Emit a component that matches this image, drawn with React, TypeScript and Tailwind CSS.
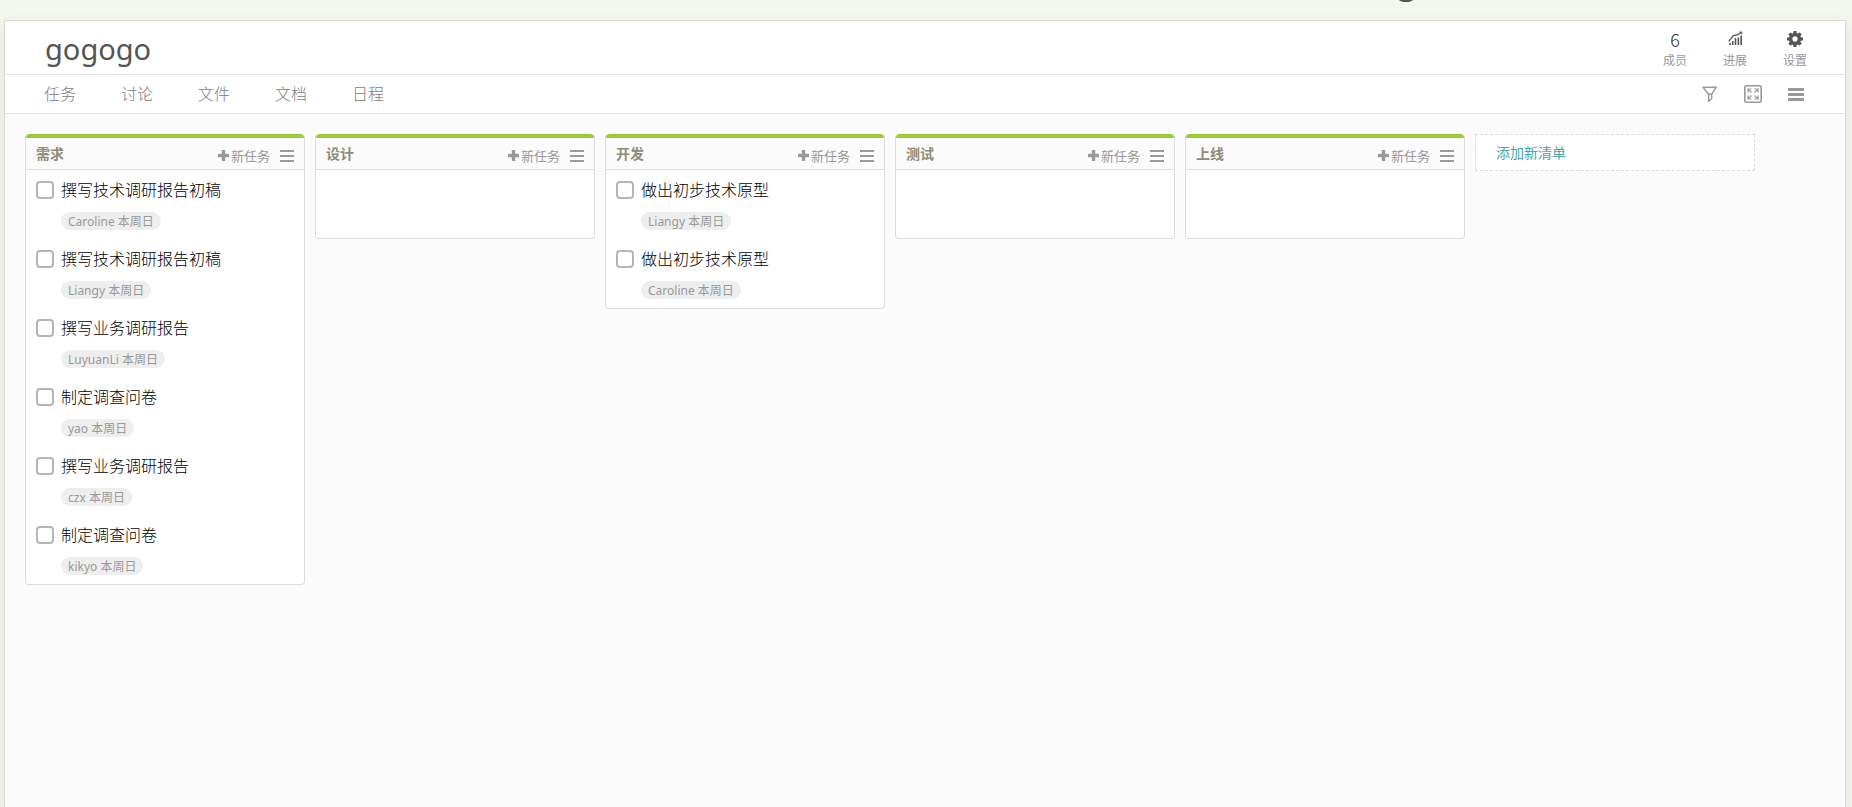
import React, { useState } from 'react';

type Task = {
  id: number;
  title: string;
  assignee: string;
  due: string;
};

type TaskList = {
  id: number;
  name: string;
  tasks: Task[];
};

const tabs = ['任务', '讨论', '文件', '文档', '日程'];

const lists: TaskList[] = [
  {
    id: 1,
    name: '需求',
    tasks: [
      { id: 1, title: '撰写技术调研报告初稿', assignee: 'Caroline', due: '本周日' },
      { id: 2, title: '撰写技术调研报告初稿', assignee: 'Liangy', due: '本周日' },
      { id: 3, title: '撰写业务调研报告', assignee: 'LuyuanLi', due: '本周日' },
      { id: 4, title: '制定调查问卷', assignee: 'yao', due: '本周日' },
      { id: 5, title: '撰写业务调研报告', assignee: 'czx', due: '本周日' },
      { id: 6, title: '制定调查问卷', assignee: 'kikyo', due: '本周日' },
    ],
  },
  { id: 2, name: '设计', tasks: [] },
  {
    id: 3,
    name: '开发',
    tasks: [
      { id: 7, title: '做出初步技术原型', assignee: 'Liangy', due: '本周日' },
      { id: 8, title: '做出初步技术原型', assignee: 'Caroline', due: '本周日' },
    ],
  },
  { id: 4, name: '测试', tasks: [] },
  { id: 5, name: '上线', tasks: [] },
];

export default function App() {
  const [done, setDone] = useState<number[]>([]);

  const toggleTask = (id: number) => {
    setDone(done.includes(id) ? done.filter(d => d !== id) : [...done, id]);
  };

  return (
    <div className="flex flex-col h-screen overflow-hidden bg-[#f4f7ee] pl-1 pr-1.5 font-['Noto_Sans','Noto_Sans_CJK_SC',sans-serif] text-[#999]">
      {/* scrolled-away page title */}
      <div className="h-5 shrink-0 pl-[76%]">
        <div className="-ml-2 flex h-0.5 items-end overflow-hidden text-4xl leading-[45px] text-[#555]">g</div>
      </div>

      <main className="flex flex-1 flex-col border border-b-0 border-[#d9dcd3] bg-[#fbfbfb] shadow-[0_4px_12px_rgba(120,120,60,0.14)]">
        <header className="flex h-[54px] shrink-0 items-center justify-between border-b border-[#e5e5e5] bg-white pl-10 pr-5">
          <h1 className="pt-0.5 text-[29px] leading-9 text-[#555]">gogogo</h1>
          <div className="flex pt-0.5 text-xs leading-4">
            <a href="#members" className="flex w-15 flex-col items-center gap-1">
              <span className="flex h-5 items-center font-['Noto_Sans_CJK_SC',sans-serif] text-lg leading-5 font-light text-[#333]">6</span>
              成员
            </a>
            <a href="#progress" className="flex w-15 flex-col items-center gap-1">
              <span className="flex h-5 items-center text-[#555]"><ChartIcon /></span>
              进展
            </a>
            <a href="#settings" className="flex w-15 flex-col items-center gap-1">
              <span className="flex h-5 items-center text-[#555]"><CogIcon /></span>
              设置
            </a>
          </div>
        </header>

        <nav className="flex h-[39px] shrink-0 items-center justify-between border-b border-[#e5e5e5] bg-white pl-[39px] pr-[41px]">
          <div className="flex gap-[45px] text-base leading-6 font-light text-[#808080]">
            {tabs.map(tab => (
              <a key={tab} href={`#${tab}`}>{tab}</a>
            ))}
          </div>
          <div className="flex items-center gap-[26px]">
            <button type="button" aria-label="筛选"><FilterIcon /></button>
            <button type="button" aria-label="全屏"><ExpandIcon /></button>
            <button type="button" aria-label="菜单"><MenuIcon /></button>
          </div>
        </nav>

        <div className="flex items-start gap-2.5 px-5 pt-5">
          {lists.map(list => (
            <section key={list.id} className="w-70 shrink-0 rounded border border-t-0 border-[#dcdcdc] bg-white">
              <div className="h-1 rounded-t-sm bg-[#9c3]"></div>
              <div className="flex h-8 items-center justify-between border-b border-[#dcdcdc] bg-[#fbfbfb] px-2.5">
                <h2 className="text-sm leading-5 font-bold text-[#8c8c78]">{list.name}</h2>
                <div className="flex items-center gap-2.5 pt-1">
                  <button type="button" className="flex items-center gap-0.5 text-[13px] leading-5">
                    <PlusIcon />
                    新任务
                  </button>
                  <button type="button" aria-label="清单菜单"><ListMenuIcon /></button>
                </div>
              </div>
              <ul className="min-h-[68px]">
                {list.tasks.map(task => (
                  <li key={task.id} className="h-[69px] px-2.5 pt-2">
                    <label className="flex items-center gap-[7px] text-base leading-6 font-light text-black">
                      <input
                        type="checkbox"
                        checked={done.includes(task.id)}
                        onChange={() => toggleTask(task.id)}
                        className="size-[18px] appearance-none rounded border-2 border-[#b5b5b5] bg-white checked:bg-[#9c3]"
                      />
                      {task.title}
                    </label>
                    <div className="flex pl-[25px] pt-2.5">
                      <span className="h-[18px] overflow-hidden rounded-full bg-[#eee] px-[7px] text-xs leading-5">
                        {task.assignee} {task.due}
                      </span>
                    </div>
                  </li>
                ))}
              </ul>
            </section>
          ))}
          <button type="button" className="h-[37px] w-70 shrink-0 border border-dashed border-[#dcdcdc] bg-white px-5 text-left text-sm leading-5 text-[#4aa5a8]">
            添加新清单
          </button>
        </div>
      </main>
    </div>
  );
}

function CogIcon() {
  return (
    <svg width="16" height="16" viewBox="0 128 1536 1536" fill="currentColor">
      <path d="M1024 896q0-106-75-181t-181-75-181 75-75 181 75 181 181 75 181-75 75-181zm512-109v222q0 12-8 23t-20 13l-185 28q-19 54-39 91 35 50 107 138 10 12 10 25t-9 23q-27 37-99 108t-94 71q-12 0-26-9l-138-108q-44 23-91 38-16 136-29 186-7 28-36 28h-222q-14 0-24.5-8.5t-11.5-21.5l-28-184q-49-16-90-37l-141 107q-10 9-25 9-14 0-25-11-126-114-165-168-7-10-7-23 0-12 8-23 15-21 51-66.5t54-70.5q-27-50-41-99l-183-27q-13-2-21-12.5t-8-23.5v-222q0-12 8-23t19-13l186-28q14-46 39-92-40-57-107-138-10-12-10-24 0-10 9-23 26-36 98.5-107.5t94.5-71.5q13 0 26 10l138 107q44-23 91-38 16-136 29-186 7-28 36-28h222q14 0 24.5 8.5t11.5 21.5l28 184q49 16 90 37l142-107q9-9 24-9 13 0 25 10 129 119 165 170 7 8 7 22 0 12-8 23-15 21-51 66.5t-54 70.5q26 50 41 98l183 28q13 2 21 12.5t8 23.5z" />
    </svg>
  );
}

function PlusIcon() {
  return (
    <svg width="11" height="11" viewBox="0 0 11 11" fill="currentColor">
      <rect x="3.8" width="3.4" height="11" rx="0.5" />
      <rect y="3.8" width="11" height="3.4" rx="0.5" />
    </svg>
  );
}

function ChartIcon() {
  return (
    <svg width="15" height="15" viewBox="0 0 15 15" fill="none" stroke="currentColor">
      <path d="M0.7 10.3L5.5 4.6L9.5 3.8L13.4 1.4" strokeWidth="1.3" />
      <path d="M11.4 1h2.4v2.4" strokeWidth="0.9" />
      <path d="M2 14v-2M4.7 14v-4M7.5 14V7M10.4 14V6.5M13.2 14V4.5" strokeWidth="1.6" />
    </svg>
  );
}

function FilterIcon() {
  return (
    <svg width="16" height="16" viewBox="0 0 16 16" fill="none" stroke="currentColor" strokeWidth="1.4">
      <path d="M1 1.2h13.4L9.7 8.2v4.6l-3 2.4V8.2z" strokeLinejoin="round" />
      <path d="M6.7 8.2h3" />
    </svg>
  );
}

function ExpandIcon() {
  return (
    <svg width="18" height="18" viewBox="0 0 18 18" fill="none" stroke="currentColor">
      <rect x="0.8" y="0.8" width="16.4" height="16.4" rx="1.5" strokeWidth="1.6" />
      <path d="M4 7.5V4h3.5M4 4l3.5 3.5M10.5 4H14v3.5M14 4l-3.5 3.5M4 10.5V14h3.5M4 14l3.5-3.5M14 10.5V14h-3.5M14 14l-3.5-3.5" strokeWidth="1.2" />
    </svg>
  );
}

function MenuIcon() {
  return (
    <svg width="16" height="13" viewBox="0 0 16 13" fill="currentColor">
      <rect width="16" height="3" rx="0.5" />
      <rect y="5" width="16" height="3" rx="0.5" />
      <rect y="10" width="16" height="3" rx="0.5" />
    </svg>
  );
}

function ListMenuIcon() {
  return (
    <svg width="14" height="12" viewBox="0 0 14 12" fill="currentColor">
      <rect width="14" height="2" />
      <rect y="5" width="14" height="2" />
      <rect y="10" width="14" height="2" />
    </svg>
  );
}
